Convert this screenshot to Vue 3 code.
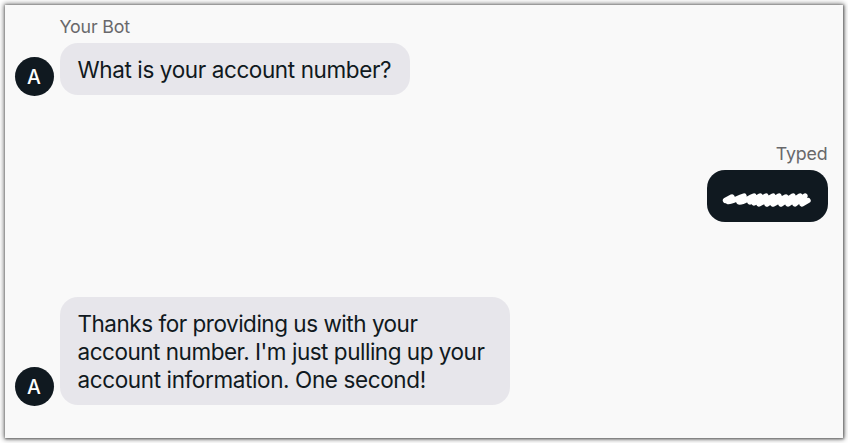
<template>
  <div class="page">
    <main class="chat">
      <section
        v-for="message in messages"
        :key="message.id"
        class="message"
        :class="message.from"
      >
        <div v-if="message.from === 'bot'" class="avatar">A</div>
        <div class="content">
          <div v-if="message.label" class="label">{{ message.label }}</div>
          <div class="bubble">
            <svg v-if="message.redacted" class="scribble" viewBox="0 0 90 18" role="img" aria-label="Hidden">
              <path d="M3.500 10.500L10 7L6 11.500C10 12 15 8 22 6L17 12C21 13 26 8 32 6L28 12L38 6L32 13L44 6L37 14L51 6L45 14L57 6L51 14L64 7L59 14L71 6L66 14L78 6L73 14L83 6L80 14L86 10.500" />
            </svg>
            <template v-else>
              <span v-for="line in message.lines" :key="line" class="line">{{ line }}</span>
            </template>
          </div>
        </div>
      </section>
    </main>
  </div>
</template>

<script setup>
const messages = [
  {
    id: 1,
    from: 'bot',
    label: 'Your Bot',
    lines: ['What is your account number?']
  },
  {
    id: 2,
    from: 'user',
    label: 'Typed',
    redacted: true
  },
  {
    id: 3,
    from: 'bot',
    lines: [
      'Thanks for providing us with your',
      "account number. I'm just pulling up your",
      'account information. One second!'
    ]
  }
]
</script>

<style>
body {
  margin: 0;
  background: #fff;
}
</style>

<style scoped>
.page {
  box-sizing: border-box;
  width: 848px;
  height: 443px;
  padding: 5px;
  overflow: hidden;
  font-family: Inter, "Liberation Sans", sans-serif;
}

.chat {
  box-sizing: border-box;
  display: flex;
  flex-direction: column;
  width: 838px;
  height: 433px;
  padding: 11px 15px 33px 10px;
  background: #f9f9f9;
  box-shadow: 0 0 2px 0.5px rgba(0, 0, 0, 0.35), 0 0 5px 1px rgba(0, 0, 0, 0.55);
}

.message {
  display: flex;
  align-items: flex-end;
  gap: 6px;
}

.message.user {
  justify-content: flex-end;
  margin: 48px 0 75px;
}

.avatar {
  width: 39px;
  height: 39px;
  margin-bottom: -1px;
  border-radius: 50%;
  background: #101920;
  color: #fff;
  font-size: 19.5px;
  font-weight: 450;
  line-height: 40px;
  text-align: center;
  text-indent: -1px;
}

.label {
  height: 22px;
  margin-bottom: 5px;
  color: #68686b;
  font-size: 17.8px;
  letter-spacing: -0.15px;
  line-height: 22px;
  text-indent: -0.5px;
  white-space: nowrap;
}

.user .label {
  padding-right: 0.5px;
  text-align: right;
}

.bubble {
  box-sizing: border-box;
  width: fit-content;
  min-height: 52px;
  padding: 13px 18px 11px 17.5px;
  border-radius: 18px;
  background: #e7e6eb;
  color: #101920;
  font-size: 22.5px;
  letter-spacing: -0.39px;
  line-height: 28px;
}

.bot:first-child .bubble {
  width: 350px;
}

.bot:last-child .bubble {
  width: 450px;
  letter-spacing: -0.48px;
}

.line {
  display: block;
  white-space: nowrap;
}

.line:nth-child(3) {
  letter-spacing: -0.38px;
}

.user .bubble {
  width: 121px;
  padding: 20px 15px 14px;
  background: #101920;
}

.scribble {
  display: block;
  width: 90px;
  height: 18px;
  fill: none;
  stroke: #fff;
  stroke-width: 5.4;
  stroke-linecap: round;
  stroke-linejoin: round;
}
</style>
